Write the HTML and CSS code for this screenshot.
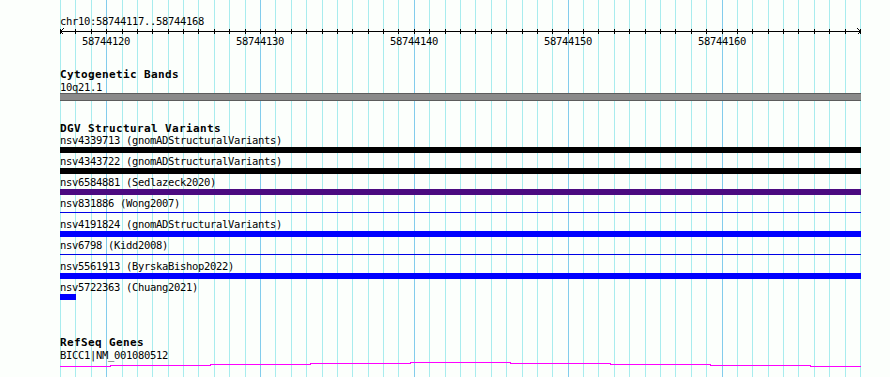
FILE: index.html
```html
<!DOCTYPE html>
<html lang="en">
<head>
<meta charset="utf-8">
<title>chr10:58744117..58744168</title>
<link rel="stylesheet" href="styles.css">
</head>
<body>
<svg class="grid" width="890" height="377" viewBox="0 0 890 377" aria-hidden="true">
  <path class="grid-minor" d="M60.5 0V377M75.5 0V377M91.5 0V377M122.5 0V377M137.5 0V377M152.5 0V377M168.5 0V377M183.5 0V377M198.5 0V377M214.5 0V377M229.5 0V377M245.5 0V377M275.5 0V377M291.5 0V377M306.5 0V377M322.5 0V377M337.5 0V377M352.5 0V377M368.5 0V377M383.5 0V377M398.5 0V377M429.5 0V377M445.5 0V377M460.5 0V377M475.5 0V377M491.5 0V377M506.5 0V377M522.5 0V377M537.5 0V377M552.5 0V377M583.5 0V377M598.5 0V377M614.5 0V377M629.5 0V377M645.5 0V377M660.5 0V377M675.5 0V377M691.5 0V377M706.5 0V377M737.5 0V377M752.5 0V377M768.5 0V377M783.5 0V377M798.5 0V377M814.5 0V377M829.5 0V377M845.5 0V377M860.5 0V377"/>
  <path class="grid-major" d="M106.5 0V377M260.5 0V377M414.5 0V377M568.5 0V377M722.5 0V377"/>
</svg>

<main class="panel">
  <section class="ruler">
    <div class="locus">chr10:58744117..58744168</div>
    <svg class="scale" width="801" height="7" viewBox="0 0 801 7" aria-hidden="true">
      <path class="scale-line" d="M0 3.5H801"/>
      <path class="scale-line" d="M0.5 1V6M15.5 1V6M31.5 1V6M46.5 1V6M62.5 1V6M77.5 1V6M92.5 1V6M108.5 1V6M123.5 1V6M138.5 1V6M154.5 1V6M169.5 1V6M185.5 1V6M200.5 1V6M215.5 1V6M231.5 1V6M246.5 1V6M262.5 1V6M277.5 1V6M292.5 1V6M308.5 1V6M323.5 1V6M338.5 1V6M354.5 1V6M369.5 1V6M385.5 1V6M400.5 1V6M415.5 1V6M431.5 1V6M446.5 1V6M462.5 1V6M477.5 1V6M492.5 1V6M508.5 1V6M523.5 1V6M538.5 1V6M554.5 1V6M569.5 1V6M585.5 1V6M600.5 1V6M615.5 1V6M631.5 1V6M646.5 1V6M662.5 1V6M677.5 1V6M692.5 1V6M708.5 1V6M723.5 1V6M738.5 1V6M754.5 1V6M769.5 1V6M785.5 1V6M800.5 1V6"/>
      <path class="scale-arrow" d="M3.5 0.5L0.5 3.5L3.5 6.5"/>
      <path class="scale-arrow" d="M797.5 0.5L800.5 3.5L797.5 6.5"/>
    </svg>
    <div class="ticks">
      <span>58744120</span><span>58744130</span><span>58744140</span><span>58744150</span><span>58744160</span>
    </div>
  </section>

  <section class="track">
    <h2 class="track-title">Cytogenetic Bands</h2>
    <div class="feat-label feat-label--tall">10q21.1</div>
    <div class="band"></div>
  </section>

  <section class="track track--dgv">
    <h2 class="track-title">DGV Structural Variants</h2>
    <div class="sv"><div class="feat-label">nsv4339713 (gnomADStructuralVariants)</div><div class="bar bar--black"></div></div>
    <div class="sv"><div class="feat-label">nsv4343722 (gnomADStructuralVariants)</div><div class="bar bar--black"></div></div>
    <div class="sv"><div class="feat-label">nsv6584881 (Sedlazeck2020)</div><div class="bar bar--purple"></div></div>
    <div class="sv"><div class="feat-label">nsv831886 (Wong2007)</div><div class="bar bar--line"></div></div>
    <div class="sv"><div class="feat-label">nsv4191824 (gnomADStructuralVariants)</div><div class="bar bar--blue"></div></div>
    <div class="sv"><div class="feat-label">nsv6798 (Kidd2008)</div><div class="bar bar--line"></div></div>
    <div class="sv"><div class="feat-label">nsv5561913 (ByrskaBishop2022)</div><div class="bar bar--blue"></div></div>
    <div class="sv"><div class="feat-label">nsv5722363 (Chuang2021)</div><div class="bar bar--blue bar--short"></div></div>
  </section>

  <section class="track track--genes">
    <h2 class="track-title">RefSeq Genes</h2>
    <div class="feat-label feat-label--tall">BICC1|NM_001080512</div>
    <svg class="gene" width="801" height="8" viewBox="0 0 801 8" aria-hidden="true">
      <path class="gene-intron" d="M0 5.5H50V4.5H150V3.5H250V2.5H350V1.5H450V2.5H550V3.5H650V4.5H750V5.5H801"/>
    </svg>
  </section>
</main>
</body>
</html>
```

FILE: styles.css
```css
html, body {
  margin: 0;
  padding: 0;
}

body {
  position: relative;
  width: 890px;
  height: 377px;
  overflow: hidden;
  background: #fcfffc;
  color: #000;
  font-family: "DejaVu Sans Mono", "Liberation Mono", monospace;
  font-size: 10.5px;
  letter-spacing: -0.32px;
}

.grid {
  position: absolute;
  left: 0;
  top: 0;
  z-index: 0;
  shape-rendering: crispEdges;
}

.grid-minor {
  stroke: #a8ecee;
  stroke-width: 1;
  fill: none;
}

.grid-major {
  stroke: #82ccec;
  stroke-width: 1;
  fill: none;
}

.panel {
  position: relative;
  z-index: 1;
  width: 801px;
  padding: 15px 0 0 60px;
  display: flex;
  flex-direction: column;
}

.ruler {
  display: flex;
  flex-direction: column;
}

.locus {
  height: 13px;
  line-height: 13px;
  white-space: nowrap;
}

.scale {
  display: block;
  shape-rendering: crispEdges;
}

.scale-line,
.scale-arrow {
  stroke: #000;
  stroke-width: 1;
  fill: none;
}

.ticks {
  display: flex;
  height: 13px;
  line-height: 13px;
  padding-left: 22px;
}

.ticks span {
  flex: none;
  width: 154px;
}

.track {
  display: flex;
  flex-direction: column;
  margin-top: 20px;
}

.track--dgv {
  margin-top: 21px;
}

.track--genes {
  margin-top: 33px;
}

.track-title {
  margin: 0;
  height: 13px;
  line-height: 13px;
  font-size: 11px;
  letter-spacing: 0.38px;
  font-weight: bold;
  white-space: nowrap;
}

.feat-label {
  height: 12px;
  line-height: 11px;
  white-space: nowrap;
}

.feat-label--tall {
  line-height: 13px;
}

.band {
  box-sizing: border-box;
  width: 801px;
  height: 8px;
  background: #8a8a8a;
  border-top: 1px solid #5c5c5c;
  border-bottom: 1px solid #5c5c5c;
}

.sv {
  display: flex;
  flex-direction: column;
  height: 21px;
}

.bar {
  width: 801px;
  height: 6px;
}

.bar--black {
  background: #000;
}

.bar--purple {
  background: #4b0a80;
}

.bar--blue {
  background: #0000ff;
}

.bar--line {
  background: linear-gradient(#0000e6, #0000e6) 0 2px / 100% 1px no-repeat;
}

.bar--short {
  width: 16px;
}

.gene {
  display: block;
  shape-rendering: crispEdges;
}

.gene-intron {
  stroke: #ff00ff;
  stroke-width: 1;
  fill: none;
}
```
